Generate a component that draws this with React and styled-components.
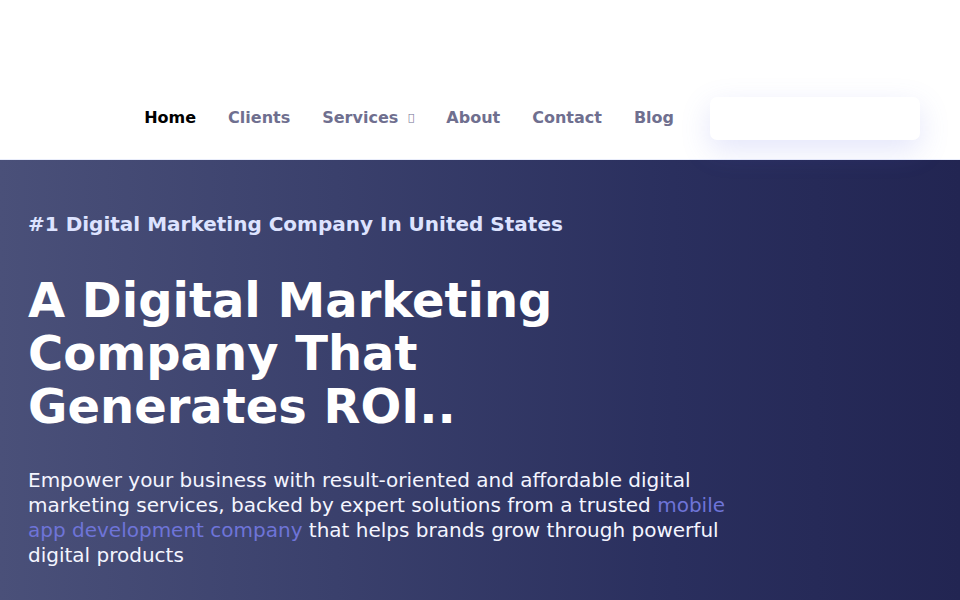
import React from "react";
import styled, { createGlobalStyle } from "styled-components";

const GlobalStyle = createGlobalStyle`
  * { box-sizing: border-box; }
  body {
    margin: 0;
    font-family: "DejaVu Sans", "Noto Sans", sans-serif;
    background: #fff;
  }
`;

const navItems = [
  { label: "Home", active: true },
  { label: "Clients" },
  { label: "Services", dropdown: true },
  { label: "About" },
  { label: "Contact" },
  { label: "Blog" },
];

const App = () => {
  return (
    <>
      <GlobalStyle />
      <Header>
        <NavRow>
          <Nav>
            {navItems.map((item) => (
              <NavLink key={item.label} $active={item.active}>
                {item.label}
                {item.dropdown && <Caret>{"\uf107"}</Caret>}
              </NavLink>
            ))}
          </Nav>
          <CtaBox />
        </NavRow>
      </Header>
      <Hero>
        <Kicker>#1 Digital Marketing Company In United States</Kicker>
        <Title>
          A Digital Marketing
          <br />
          Company That
          <br />
          Generates ROI..
        </Title>
        <Lead>
          Empower your business with result-oriented and affordable digital
          marketing services, backed by expert solutions from a trusted{" "}
          <LeadLink>mobile app development company</LeadLink> that helps brands
          grow through powerful digital products
        </Lead>
      </Hero>
    </>
  );
};

export default App;

const Header = styled.header`
  height: 160px;
  padding: 97px 40px 0;
  background: #fff;
  border-bottom: 1px solid #e9edfb;
`;

const NavRow = styled.div`
  display: flex;
  align-items: center;
  justify-content: flex-end;
  gap: 36px;
`;

const Nav = styled.nav`
  display: flex;
  align-items: center;
  gap: 32px;
  margin-top: -2px;
`;

const NavLink = styled.a`
  display: flex;
  align-items: center;
  gap: 8px;
  font-size: 16px;
  font-weight: 700;
  color: ${({ $active }) => ($active ? "#000" : "#6f6f8f")};
  text-decoration: none;
  cursor: pointer;
`;

const Caret = styled.span`
  font-size: 10px;
  font-weight: 400;
  color: #6f6f8f;
  margin-left: 2px;
`;

const CtaBox = styled.div`
  width: 210px;
  height: 43px;
  border-radius: 7px;
  background: #fff;
  box-shadow: 0 10px 30px rgba(100, 110, 230, 0.18);
`;

const Hero = styled.section`
  height: 440px;
  padding: 52px 28px 0;
  background: linear-gradient(90deg, #4a5079 0%, #3a406c 35%, #2a2f5e 70%, #222552 100%);
  color: #fff;
`;

const Kicker = styled.h2`
  margin: 0;
  font-size: 20px;
  font-weight: 700;
  line-height: 24px;
  color: #dde3ff;
`;

const Title = styled.h1`
  margin: 38px 0 0;
  font-size: 48px;
  font-weight: 700;
  line-height: 53px;
  color: #fff;
`;

const Lead = styled.p`
  margin: 35px 0 0;
  max-width: 710px;
  font-size: 20px;
  line-height: 25px;
  color: #f4f5ff;
`;

const LeadLink = styled.a`
  color: #6e74d8;
  text-decoration: none;
`;
